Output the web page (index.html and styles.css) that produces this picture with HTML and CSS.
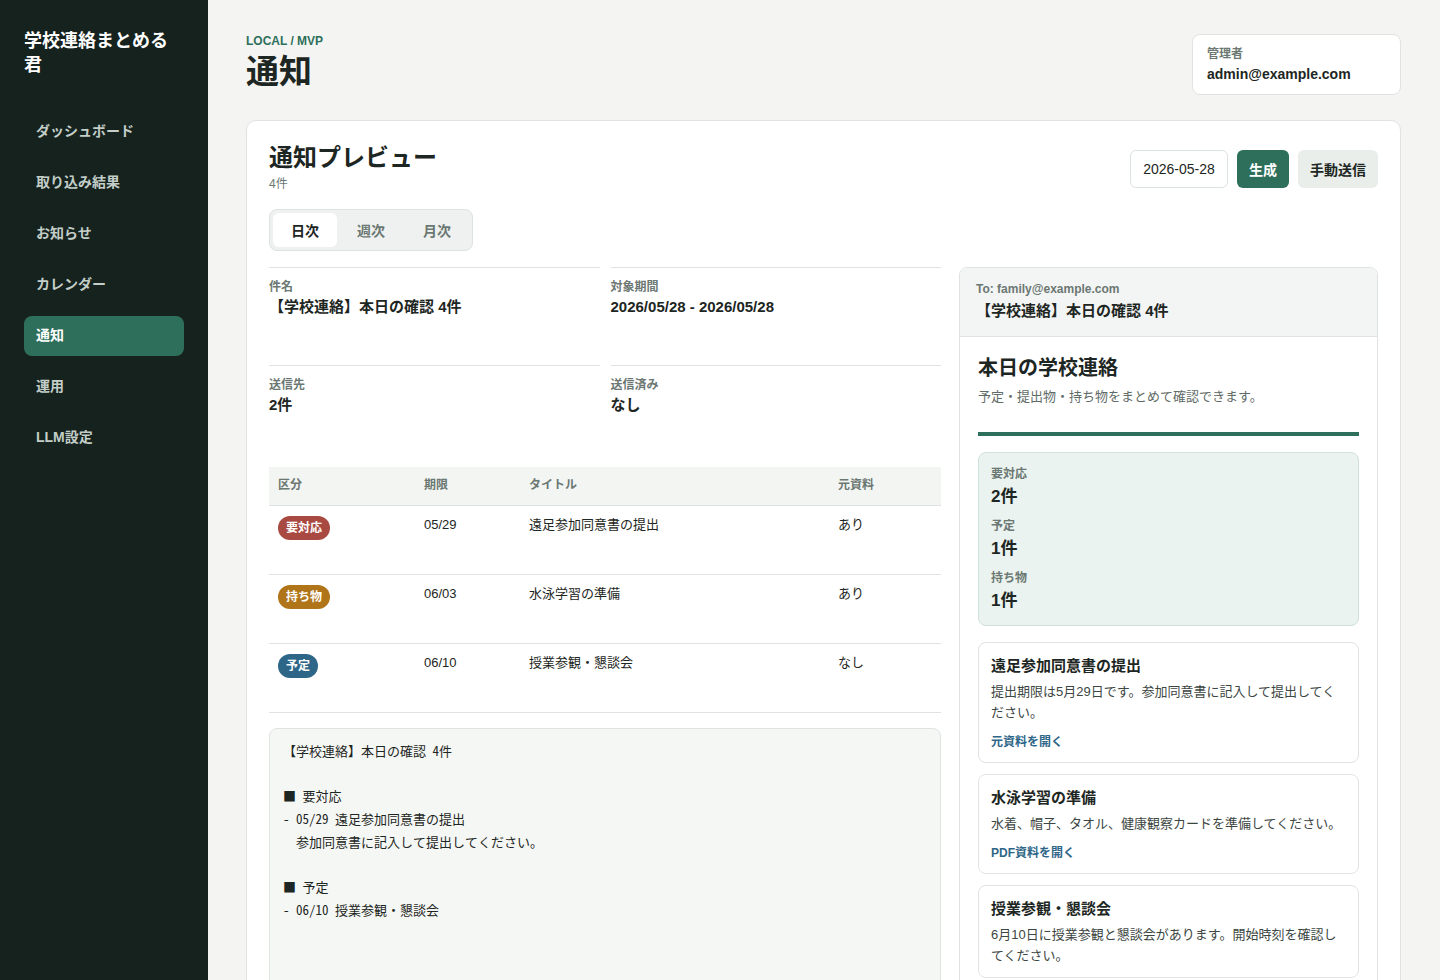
FILE: index.html
```html
<!DOCTYPE html>
<html lang="ja">
<head>
<meta charset="utf-8">
<title>通知 - 学校連絡まとめる君</title>
<link rel="stylesheet" href="styles.css">
</head>
<body>
<div class="app">
  <aside class="sidebar">
    <div class="brand">学校連絡まとめる君</div>
    <nav class="nav">
      <a class="nav-item">ダッシュボード</a>
      <a class="nav-item">取り込み結果</a>
      <a class="nav-item">お知らせ</a>
      <a class="nav-item">カレンダー</a>
      <a class="nav-item active">通知</a>
      <a class="nav-item">運用</a>
      <a class="nav-item">LLM設定</a>
    </nav>
  </aside>
  <main class="main">
    <header class="page-header">
      <div>
        <div class="eyebrow">LOCAL / MVP</div>
        <h1 class="page-title">通知</h1>
      </div>
      <div class="user-box">
        <div class="user-label">管理者</div>
        <div class="user-email">admin@example.com</div>
      </div>
    </header>

    <section class="card">
      <div class="card-head">
        <div>
          <h2 class="card-title">通知プレビュー</h2>
          <div class="card-sub">4件</div>
          <div class="tabs">
            <button class="tab active">日次</button>
            <button class="tab">週次</button>
            <button class="tab">月次</button>
          </div>
        </div>
        <div class="controls">
          <input class="date-input" type="text" value="2026-05-28" readonly>
          <button class="btn btn-primary">生成</button>
          <button class="btn btn-secondary">手動送信</button>
        </div>
      </div>

      <div class="content">
        <div class="left">
          <div class="info-grid">
            <div class="info-cell">
              <div class="info-label">件名</div>
              <div class="info-value">【学校連絡】本日の確認 4件</div>
            </div>
            <div class="info-cell">
              <div class="info-label">対象期間</div>
              <div class="info-value">2026/05/28 - 2026/05/28</div>
            </div>
            <div class="info-cell">
              <div class="info-label">送信先</div>
              <div class="info-value">2件</div>
            </div>
            <div class="info-cell">
              <div class="info-label">送信済み</div>
              <div class="info-value">なし</div>
            </div>
          </div>

          <table class="items-table">
            <colgroup>
              <col class="c1"><col class="c2"><col class="c3"><col class="c4">
            </colgroup>
            <thead>
              <tr><th>区分</th><th>期限</th><th>タイトル</th><th>元資料</th></tr>
            </thead>
            <tbody>
              <tr>
                <td><span class="badge badge-action">要対応</span></td>
                <td>05/29</td>
                <td>遠足参加同意書の提出</td>
                <td>あり</td>
              </tr>
              <tr>
                <td><span class="badge badge-item">持ち物</span></td>
                <td>06/03</td>
                <td>水泳学習の準備</td>
                <td>あり</td>
              </tr>
              <tr>
                <td><span class="badge badge-plan">予定</span></td>
                <td>06/10</td>
                <td>授業参観・懇談会</td>
                <td>なし</td>
              </tr>
            </tbody>
          </table>

          <pre class="plain-text">【学校連絡】本日の確認 4件

■ 要対応
- 05/29 遠足参加同意書の提出
  参加同意書に記入して提出してください。

■ 予定
- 06/10 授業参観・懇談会</pre>
        </div>

        <div class="mail">
          <div class="mail-head">
            <div class="mail-to">To: family@example.com</div>
            <div class="mail-subject">【学校連絡】本日の確認 4件</div>
          </div>
          <div class="mail-body">
            <div class="mail-intro">
              <div class="mail-title">本日の学校連絡</div>
              <div class="mail-lead">予定・提出物・持ち物をまとめて確認できます。</div>
            </div>
            <div class="summary">
              <div class="sum-label">要対応</div>
              <div class="sum-value">2件</div>
              <div class="sum-label">予定</div>
              <div class="sum-value">1件</div>
              <div class="sum-label">持ち物</div>
              <div class="sum-value">1件</div>
            </div>
            <div class="mail-item">
              <div class="mi-title">遠足参加同意書の提出</div>
              <div class="mi-desc">提出期限は5月29日です。参加同意書に記入して提出してください。</div>
              <a class="mi-link">元資料を開く</a>
            </div>
            <div class="mail-item">
              <div class="mi-title">水泳学習の準備</div>
              <div class="mi-desc">水着、帽子、タオル、健康観察カードを準備してください。</div>
              <a class="mi-link">PDF資料を開く</a>
            </div>
            <div class="mail-item">
              <div class="mi-title">授業参観・懇談会</div>
              <div class="mi-desc">6月10日に授業参観と懇談会があります。開始時刻を確認してください。</div>
            </div>
          </div>
        </div>
      </div>
    </section>
  </main>
</div>
</body>
</html>
```

FILE: styles.css
```css
* { box-sizing: border-box; }

html, body {
  margin: 0;
  padding: 0;
}

body {
  font-family: "Liberation Sans", "Noto Sans CJK JP", sans-serif;
  color: #1d2622;
  background: #f4f5f3;
  font-size: 14px;
  line-height: 1.4;
}

h1, h2 { margin: 0; }

.app {
  display: flex;
  min-height: 100vh;
}

/* Sidebar */
.sidebar {
  width: 208px;
  flex: 0 0 208px;
  background: #15221e;
  padding: 29px 24px;
}

.brand {
  color: #ffffff;
  font-size: 18px;
  font-weight: 700;
  line-height: 24px;
}

.nav {
  margin-top: 35px;
  display: flex;
  flex-direction: column;
  gap: 11px;
}

.nav-item {
  display: flex;
  align-items: center;
  height: 40px;
  padding: 0 12px;
  border-radius: 8px;
  font-size: 14px;
  font-weight: 700;
  color: #c3cec8;
}

.nav-item.active {
  background: #2e6f5b;
  color: #ffffff;
}

/* Main */
.main {
  flex: 1;
  min-width: 0;
  padding: 34px 39px 0 38px;
}

.page-header {
  display: flex;
  justify-content: space-between;
  align-items: flex-start;
}

.eyebrow {
  font-size: 12px;
  font-weight: 700;
  line-height: 14px;
  color: #2e6f5b;
}

.page-title {
  margin-top: 4px;
  font-size: 33px;
  line-height: 40px;
  font-weight: 700;
  color: #1d2622;
}

.user-box {
  min-width: 209px;
  background: #ffffff;
  border: 1px solid #dfe4e1;
  border-radius: 8px;
  padding: 11px 14px;
}

.user-label {
  font-size: 12px;
  font-weight: 700;
  line-height: 16px;
  color: #6b7772;
}

.user-email {
  margin-top: 3px;
  font-size: 14px;
  font-weight: 700;
  line-height: 18px;
  color: #1d2622;
}

/* Card */
.card {
  margin-top: 25px;
  background: #ffffff;
  border: 1px solid #dfe4e1;
  border-radius: 10px;
  padding: 22px 22px 40px;
}

.card-head {
  display: flex;
  justify-content: space-between;
  align-items: flex-start;
}

.card-title {
  font-size: 24px;
  line-height: 30px;
  font-weight: 700;
}

.card-sub {
  margin-top: 2px;
  font-size: 12px;
  line-height: 18px;
  color: #6b7772;
}

.tabs {
  margin-top: 16px;
  display: inline-flex;
  gap: 2px;
  padding: 3px;
  background: #eef1ef;
  border: 1px solid #dde3df;
  border-radius: 8px;
}

.tab {
  width: 64px;
  height: 34px;
  border: 0;
  border-radius: 6px;
  background: transparent;
  font-family: inherit;
  font-size: 14px;
  font-weight: 700;
  color: #6b7772;
  padding: 0;
}

.tab.active {
  background: #ffffff;
  color: #1d2622;
}

.controls {
  display: flex;
  align-items: center;
  gap: 9px;
  margin-top: 7px;
}

.date-input {
  width: 98px;
  height: 38px;
  border: 1px solid #dde3df;
  border-radius: 6px;
  padding: 0 12px;
  font-family: inherit;
  font-size: 14px;
  color: #1d2622;
  background: #ffffff;
  text-align: center;
}

.btn {
  height: 38px;
  border: 0;
  border-radius: 6px;
  padding: 0 12px;
  font-family: inherit;
  font-size: 14px;
  font-weight: 700;
}

.btn-primary {
  background: #2e6f5b;
  color: #ffffff;
}

.btn-secondary {
  background: #e9eeeb;
  color: #1d2622;
}

/* Content */
.content {
  margin-top: 16px;
  display: grid;
  grid-template-columns: minmax(0, 1fr) 419px;
  gap: 18px;
  align-items: start;
}

.info-grid {
  display: grid;
  grid-template-columns: 1fr 1fr;
  column-gap: 11px;
}

.info-cell {
  border-top: 1px solid #dfe4e1;
  height: 98px;
  padding-top: 11px;
}

.info-label {
  font-size: 12px;
  line-height: 16px;
  font-weight: 700;
  color: #6b7772;
}

.info-value {
  margin-top: 1px;
  font-size: 15px;
  line-height: 22px;
  font-weight: 700;
}

/* Table */
.items-table {
  margin-top: 4px;
  width: 100%;
  border-collapse: collapse;
  table-layout: fixed;
}

.items-table .c1 { width: 146px; }
.items-table .c2 { width: 105px; }
.items-table .c4 { width: 112px; }

.items-table th {
  background: #f3f5f3;
  height: 38px;
  padding: 0 9px;
  text-align: left;
  font-size: 12px;
  font-weight: 700;
  color: #6b7772;
  border-bottom: 1px solid #dfe4e1;
}

.items-table td {
  height: 69px;
  padding: 10px 9px;
  vertical-align: top;
  font-size: 13px;
  line-height: 18px;
  color: #1d2622;
  border-bottom: 1px solid #dfe4e1;
}

.badge {
  display: inline-flex;
  align-items: center;
  height: 24px;
  padding: 0 8px;
  border-radius: 12px;
  font-size: 12px;
  font-weight: 700;
  color: #ffffff;
}

.badge-action { background: #a84a42; }
.badge-item { background: #b07419; }
.badge-plan { background: #2e6688; }

/* Plain text */
.plain-text {
  margin: 15px 0 0;
  min-height: 290px;
  background: #f5f7f5;
  border: 1px solid #dfe4e1;
  border-radius: 8px;
  padding: 11px 13px;
  font-family: "Noto Sans Mono CJK JP", "DejaVu Sans Mono", "Noto Sans CJK JP", monospace;
  font-size: 13px;
  line-height: 22.8px;
  color: #1d2622;
  white-space: pre;
}

/* Mail preview */
.mail {
  border: 1px solid #dfe4e1;
  border-radius: 8px;
  overflow: hidden;
  background: #ffffff;
}

.mail-head {
  background: #f3f5f4;
  border-bottom: 1px solid #dfe4e1;
  padding: 13px 16px 14px;
}

.mail-to {
  font-size: 12px;
  line-height: 16px;
  font-weight: 700;
  color: #6b7772;
}

.mail-subject {
  margin-top: 3px;
  font-size: 15px;
  line-height: 22px;
  font-weight: 700;
}

.mail-body {
  padding: 17px 18px 18px;
  display: flex;
  flex-direction: column;
}

.mail-intro {
  padding-bottom: 26px;
  border-bottom: 4px solid #2e6f5b;
}

.mail-title {
  font-size: 20px;
  line-height: 28px;
  font-weight: 700;
}

.mail-lead {
  margin-top: 6px;
  font-size: 13px;
  line-height: 18px;
  color: #5f6b66;
}

.summary {
  margin-top: 16px;
  background: #eaf3ef;
  border: 1px solid #cfe1d8;
  border-radius: 8px;
  padding: 13px 12px 12px;
}

.sum-label {
  font-size: 12px;
  line-height: 16px;
  font-weight: 700;
  color: #6b7772;
}

.sum-value {
  margin-top: 3px;
  margin-bottom: 9px;
  font-size: 17px;
  line-height: 24px;
  font-weight: 700;
}

.sum-value:last-child { margin-bottom: 0; }

.mail-item {
  margin-top: 16px;
  border: 1px solid #dfe4e1;
  border-radius: 8px;
  padding: 12px 12px 11px;
}

.mail-item + .mail-item { margin-top: 11px; }

.mi-title {
  font-size: 15px;
  line-height: 22px;
  font-weight: 700;
}

.mi-desc {
  margin-top: 4px;
  font-size: 13px;
  line-height: 21px;
  color: #3c4642;
}

.mi-link {
  display: block;
  margin-top: 10px;
  font-size: 12px;
  line-height: 18px;
  font-weight: 700;
  color: #2e6688;
}
```
